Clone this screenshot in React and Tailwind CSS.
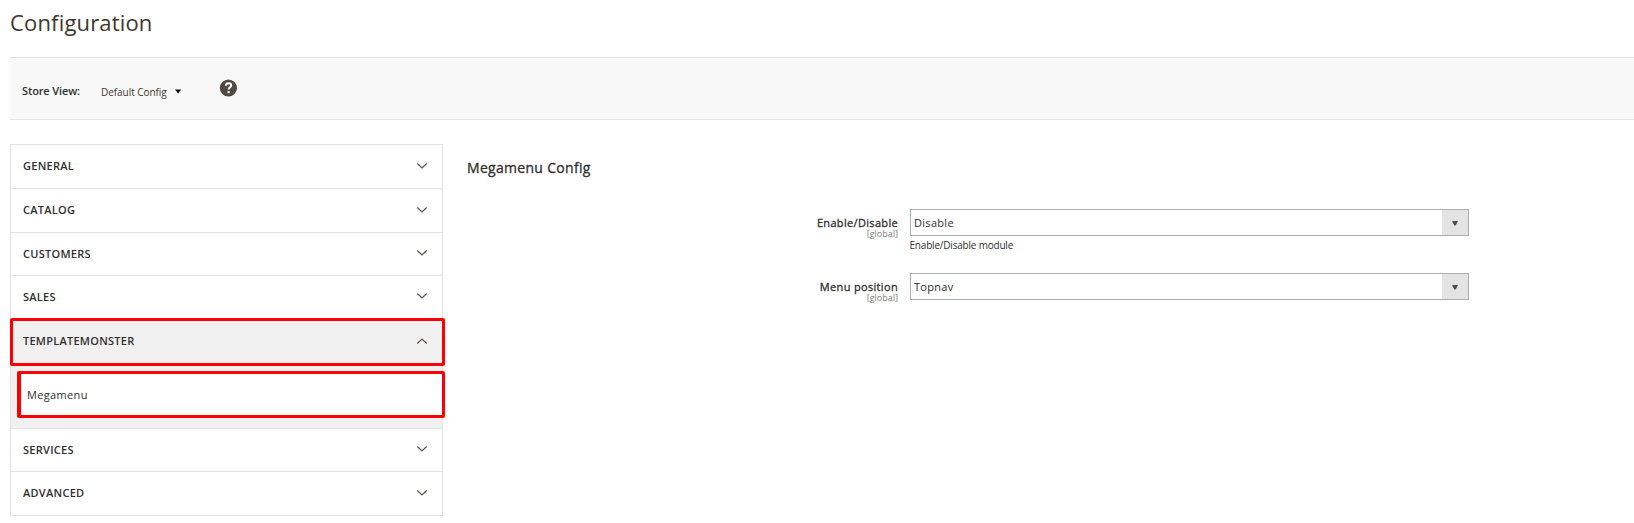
import React from "react";

function Chevron({ up }) {
  return (
    <svg width="12" height="8" viewBox="0 0 12 8" fill="none" stroke="#5f5a57" strokeWidth="1.4" className={up ? "relative -top-px rotate-180" : "relative -top-px"}>
      <path d="M1.3 1.6 L6 5.9 L10.7 1.6" />
    </svg>
  );
}

function Section({ title, height, shift = "-top-px" }) {
  return (
    <div className={`flex ${height} items-center justify-between border-t border-[#e3e3e3] pl-3 pr-[14px]`}>
      <span className={`relative ${shift} text-[11px] font-semibold leading-4 tracking-[0.27px]`}>{title}</span>
      <Chevron />
    </div>
  );
}

function Field({ label, value, note }) {
  return (
    <div className="flex h-16 items-start">
      <div className="flex w-[431px] flex-col items-end pt-[6px]">
        <span className="text-[11px] leading-4 tracking-[0.33px] [-webkit-text-stroke:0.3px_#303030]">{label}</span>
        <span className="-mt-[3px] text-[9px] leading-3 text-[#808080]">[global]</span>
      </div>
      <div className="ml-3 w-[559px]">
        <div className="flex h-[27px] items-stretch border border-[#adadad] bg-white">
          <span className="flex-1 pl-[3px] pt-[5px] text-[11px] leading-4 tracking-[0.3px]">{value}</span>
          <span className="flex w-[26px] items-center justify-center bg-[#e3e3e3]">
            <svg width="6" height="5" viewBox="0 0 6 5" className="relative top-px"><path d="M0 0H6L3.6 4.5H2.4Z" fill="#514943" /></svg>
          </span>
        </div>
        {note && <p className="-ml-[0.5px] mt-[1px] text-[10px] leading-4 tracking-[-0.2px]">{note}</p>}
      </div>
    </div>
  );
}

export default function App() {
  return (
    <div className="h-[523px] overflow-hidden bg-white pl-[10px] font-['Open_Sans',sans-serif] text-[#303030]">
      <h1 className="h-[57px] pt-[6px] text-[22px] leading-8 tracking-[0.17px] text-[#41362f]">Configuration</h1>
      <div className="flex h-[63px] items-center border-y border-[#e3e3e3] bg-[#f8f8f8] pl-3 pt-1">
        <span className="w-[79px] text-[11px] font-semibold leading-4 tracking-[-0.13px]">Store View:</span>
        <span className="w-[73px] pt-[2px] text-[10px] leading-4 tracking-[-0.05px] text-[#41362f]">Default Config</span>
        <svg width="8" height="5" viewBox="0 0 8 5" className="relative top-px"><path d="M1 0.5H7.2L4.1 4.6Z" fill="#000" /></svg>
        <svg width="18" height="18" viewBox="0 0 18 18" className="relative -top-[3px] ml-[37px]">
          <circle cx="9.4" cy="9" r="8.6" fill="#514943" />
          <path d="M6.8 6.7C6.9 5 7.9 4.2 9.5 4.2C11.2 4.2 12.2 5.1 12.2 6.4C12.2 8.2 9.6 8.3 9.6 10.6" fill="none" stroke="#fff" strokeWidth="2" />
          <rect x="8.5" y="12.1" width="2.2" height="2.1" fill="#fff" />
        </svg>
      </div>
      <div className="flex pt-6">
        <nav className="w-[433px] border-x border-b border-[#e3e3e3]">
          <Section title="GENERAL" height="h-11" />
          <Section title="CATALOG" height="h-11" />
          <Section title="CUSTOMERS" height="h-[43px]" shift="top-0" />
          <Section title="SALES" height="h-[43px]" shift="top-0" />
          <div className="h-[110px] bg-[#f0f0f0]">
            <div className="-ml-px -mr-[3px] flex h-12 items-center justify-between rounded-xs border-3 border-[#ff0000] pl-[10px] pr-[14px]">
              <span className="relative -top-px text-[11px] font-semibold leading-4 tracking-[0.25px]">TEMPLATEMONSTER</span>
              <Chevron up />
            </div>
            <div className="-mr-[3px] ml-[6px] mt-[5px] flex h-[47px] items-center rounded-xs border-3 border-l-4 border-[#ff0000] bg-white pl-[6px] text-[11px] leading-4 tracking-[0.35px]">Megamenu</div>
          </div>
          <Section title="SERVICES" height="h-[43px]" shift="top-0" />
          <Section title="ADVANCED" height="h-11" />
        </nav>
        <main className="pl-6">
          <h2 className="h-[65px] pt-[14px] text-[14px] leading-5 tracking-[0.3px] [-webkit-text-stroke:0.3px_#303030]">Megamenu Config</h2>
          <Field label="Enable/Disable" value="Disable" note="Enable/Disable module" />
          <Field label="Menu position" value="Topnav" />
        </main>
      </div>
    </div>
  );
}
